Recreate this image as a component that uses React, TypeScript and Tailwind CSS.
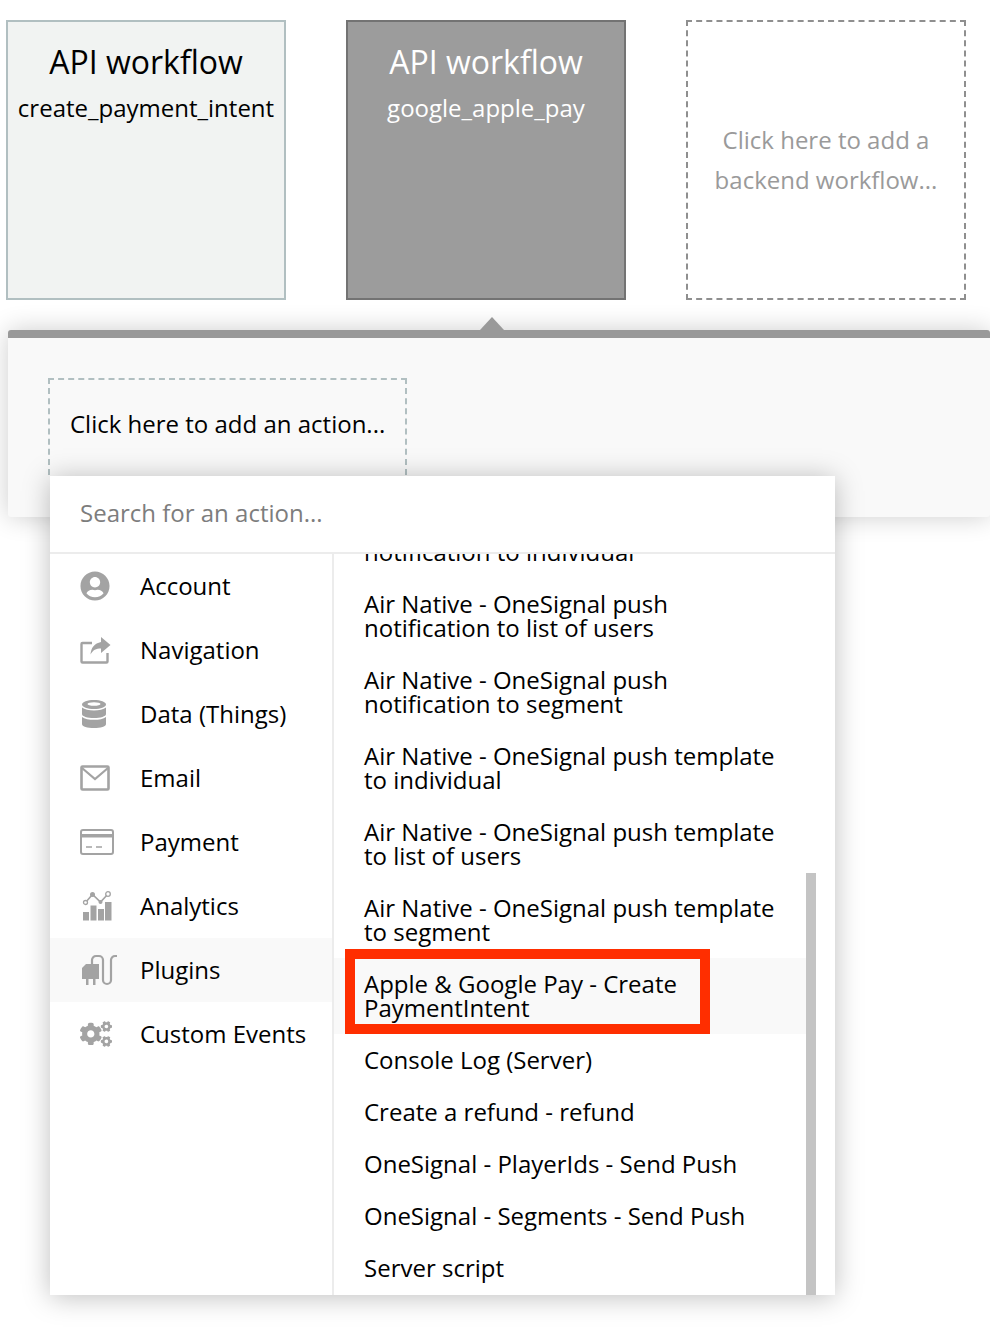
import { FaCogs, FaUserCircle } from 'react-icons/fa'

const font = "font-['Open_Sans',sans-serif]"

function NavIcon() {
  return (
    <svg width="32" height="28" viewBox="0 0 32 28" className="text-[#a3a3a3]">
      <path d="M12 7H2.500a1 1 0 0 0-1 1v17.500a1 1 0 0 0 1 1h24a1 1 0 0 0 1-1V17" fill="none" stroke="currentColor" strokeWidth="2.400" />
      <path d="M21 1l9.500 8-9.500 8v-4.500c-5 0-8 1.500-10.500 6 .5-7 4-11 10.500-12.500z" fill="currentColor" />
    </svg>
  )
}

function DbIcon() {
  return (
    <svg width="26" height="30" viewBox="0 0 26 30" className="text-[#a3a3a3]">
      <path d="M1 5.500C1 2.800 6.500 1 13 1s12 1.800 12 4.500S19.500 10 13 10 1 8.200 1 5.500z" fill="currentColor" />
      <ellipse cx="13" cy="5" rx="6.500" ry="1.800" fill="#fff" />
      <path d="M1 8.500C3.500 10.500 8 11.500 13 11.500s9.500-1 12-3V15c0 2.500-5.500 4-12 4S1 17.500 1 15z" fill="currentColor" />
      <path d="M1 18c2.500 2 7 2.800 12 2.800S22.500 20 25 18v7c0 2.800-5.500 4-12 4S1 27.800 1 25z" fill="currentColor" />
    </svg>
  )
}

function MailIcon() {
  return (
    <svg width="30" height="26" viewBox="0 0 30 26" className="text-[#a3a3a3]">
      <rect x="1.500" y="1.500" width="27" height="23" rx="1" fill="none" stroke="currentColor" strokeWidth="2.600" />
      <path d="M2 3l13 11L28 3" fill="none" stroke="currentColor" strokeWidth="2.200" />
    </svg>
  )
}

function CardIcon() {
  return (
    <svg width="34" height="26" viewBox="0 0 34 26" className="text-[#a3a3a3]">
      <rect x="1" y="1" width="32" height="24" rx="2" fill="none" stroke="currentColor" strokeWidth="2" />
      <rect x="1" y="5" width="32" height="3.500" fill="currentColor" />
      <path d="M6 18h6M16 18h6" stroke="currentColor" strokeWidth="1.600" />
    </svg>
  )
}

function ChartIcon() {
  return (
    <svg width="30" height="30" viewBox="0 0 30 30" className="text-[#a3a3a3]">
      <rect x="1" y="21" width="6" height="8.500" fill="currentColor" />
      <rect x="8.500" y="14.500" width="6" height="15" fill="currentColor" />
      <rect x="16" y="18" width="6" height="11.500" fill="currentColor" />
      <rect x="23" y="11" width="6.500" height="18.500" fill="currentColor" />
      <path d="M3.500 11.500L10.500 3.500l8 7.500 7.500-8" fill="none" stroke="currentColor" strokeWidth="1.600" />
      <circle cx="3.500" cy="11.500" r="2" fill="#fff" stroke="currentColor" strokeWidth="1.300" />
      <circle cx="10.500" cy="3.500" r="2.500" fill="currentColor" />
      <circle cx="18.500" cy="11" r="2" fill="currentColor" />
      <circle cx="26" cy="3" r="2.300" fill="#fff" stroke="currentColor" strokeWidth="1.300" />
    </svg>
  )
}

function PluginIcon() {
  return (
    <svg width="36" height="32" viewBox="0 0 36 32" className="text-[#a3a3a3]">
      <path d="M0 14l4-4h13v15H0zM4 25h2.500v6H4zM11 25h2.500v6H11z" fill="currentColor" />
      <path d="M10 11V6a4 4 0 0 1 4-4h3a4 4 0 0 1 4 4v20a4 4 0 0 0 8 0V6a4 4 0 0 1 4-4h2" fill="none" stroke="currentColor" strokeWidth="2.200" />
    </svg>
  )
}

const categories = [
  { label: 'Account', icon: <FaUserCircle className="text-[30px] text-[#a3a3a3]" /> },
  { label: 'Navigation', icon: <NavIcon /> },
  { label: 'Data (Things)', icon: <DbIcon />, inset: 'pl-[31px]' },
  { label: 'Email', icon: <MailIcon />, inset: 'pl-[30px]' },
  { label: 'Payment', icon: <CardIcon />, inset: 'pl-[30px]' },
  { label: 'Analytics', icon: <ChartIcon />, inset: 'pl-[32px]' },
  { label: 'Plugins', icon: <PluginIcon />, inset: 'pl-[32px]', active: true },
  { label: 'Custom Events', icon: <FaCogs className="text-[32px] text-[#a3a3a3]" />, inset: 'pl-[30px]' },
]

const actions = [
  { lines: ['Air Native - OneSignal push', 'notification to individual'] },
  { lines: ['Air Native - OneSignal push', 'notification to list of users'] },
  { lines: ['Air Native - OneSignal push', 'notification to segment'] },
  { lines: ['Air Native - OneSignal push template', 'to individual'] },
  { lines: ['Air Native - OneSignal push template', 'to list of users'] },
  { lines: ['Air Native - OneSignal push template', 'to segment'] },
  { lines: ['Apple & Google Pay - Create', 'PaymentIntent'], active: true },
  { lines: ['Console Log (Server)'] },
  { lines: ['Create a refund - refund'] },
  { lines: ['OneSignal - PlayerIds - Send Push'] },
  { lines: ['OneSignal - Segments - Send Push'] },
  { lines: ['Server script'] },
]

export default function App() {
  return (
    <div className={`relative h-[1340px] w-[990px] overflow-hidden bg-white text-black ${font}`}>
      <div className="flex gap-[60px] pl-[6px] pt-[20px]">
        <div className="h-[280px] w-[280px] border-2 border-[#b1bfc1] bg-[#f1f3f2] pt-[18px] text-center">
          <div className="text-[32px] leading-[44px]">API workflow</div>
          <div className="mt-[2px] text-[24px] leading-[44px] whitespace-nowrap">create_payment_intent</div>
        </div>
        <div className="h-[280px] w-[280px] border-2 border-[#737373] bg-[#9c9c9c] pt-[18px] text-center text-white">
          <div className="text-[32px] leading-[44px]">API workflow</div>
          <div className="mt-[2px] text-[24px] leading-[44px]">google_apple_pay</div>
        </div>
        <div className="flex h-[280px] w-[280px] items-center justify-center border-2 border-dashed border-[#8f8f8f] text-center text-[24px] leading-[40px] text-[#9a9a9a]">
          <div>Click here to add a<br />backend workflow...</div>
        </div>
      </div>

      <div className="relative ml-[8px] mt-[30px] h-[187px] rounded-[3px] border-t-[8px] border-[#999999] bg-[#f9f9f9] pl-[40px] pt-[40px] shadow-[0_0_26px_rgba(0,0,0,0.2)]">
        <div className="absolute left-[472px] top-[-21px] h-0 w-0 border-x-[12px] border-b-[13px] border-x-transparent border-b-[#999999]" />
        <div className="h-[97px] w-[359px] border-2 border-b-0 border-dashed border-[#b1bfc1] pl-[20px] pt-[28px] text-[24px] leading-[32px]">
          Click here to add an action...
        </div>
      </div>

      <div className="absolute left-[50px] top-[476px] flex h-[819px] w-[785px] flex-col bg-white shadow-[0_2px_26px_rgba(0,0,0,0.26)]">
        <div className="h-[78px] shrink-0 border-b-2 border-[#ececec] pl-[30px] pt-[20px] text-[24px] leading-[34px] text-[#7d7d7d]">
          Search for an action...
        </div>
        <div className="flex min-h-0 flex-1">
          <div className="w-[284px] shrink-0 border-r-2 border-[#ececec]">
            {categories.map((c) => (
              <div key={c.label} className={`flex h-[64px] items-center ${c.active ? 'bg-[#f9f9f9]' : ''}`}>
                <div className={`flex w-[90px] shrink-0 justify-start ${c.inset ?? 'pl-[30px]'}`}>{c.icon}</div>
                <span className="text-[24px] leading-[32px]">{c.label}</span>
              </div>
            ))}
          </div>
          <div className="relative min-w-0 flex-1 overflow-hidden">
            <div className="mt-[-52px]">
              {actions.map((a) => (
                <div
                  key={a.lines[0] + a.lines[1]}
                  className={`w-[472px] py-[14px] pl-[30px] text-[24px] leading-[24px] whitespace-nowrap ${a.active ? 'relative bg-[#f9f9f9]' : ''}`}
                >
                  {a.lines.map((l) => (
                    <div key={l}>{l}</div>
                  ))}
                  {a.active && <div className="absolute left-[11px] top-[-9px] h-[85px] w-[365px] border-[10px] border-[#ff2e00]" />}
                </div>
              ))}
            </div>
            <div className="absolute right-[19px] top-[319px] h-[423px] w-[10px] bg-[#c4c4c4]" />
          </div>
        </div>
      </div>
    </div>
  )
}
